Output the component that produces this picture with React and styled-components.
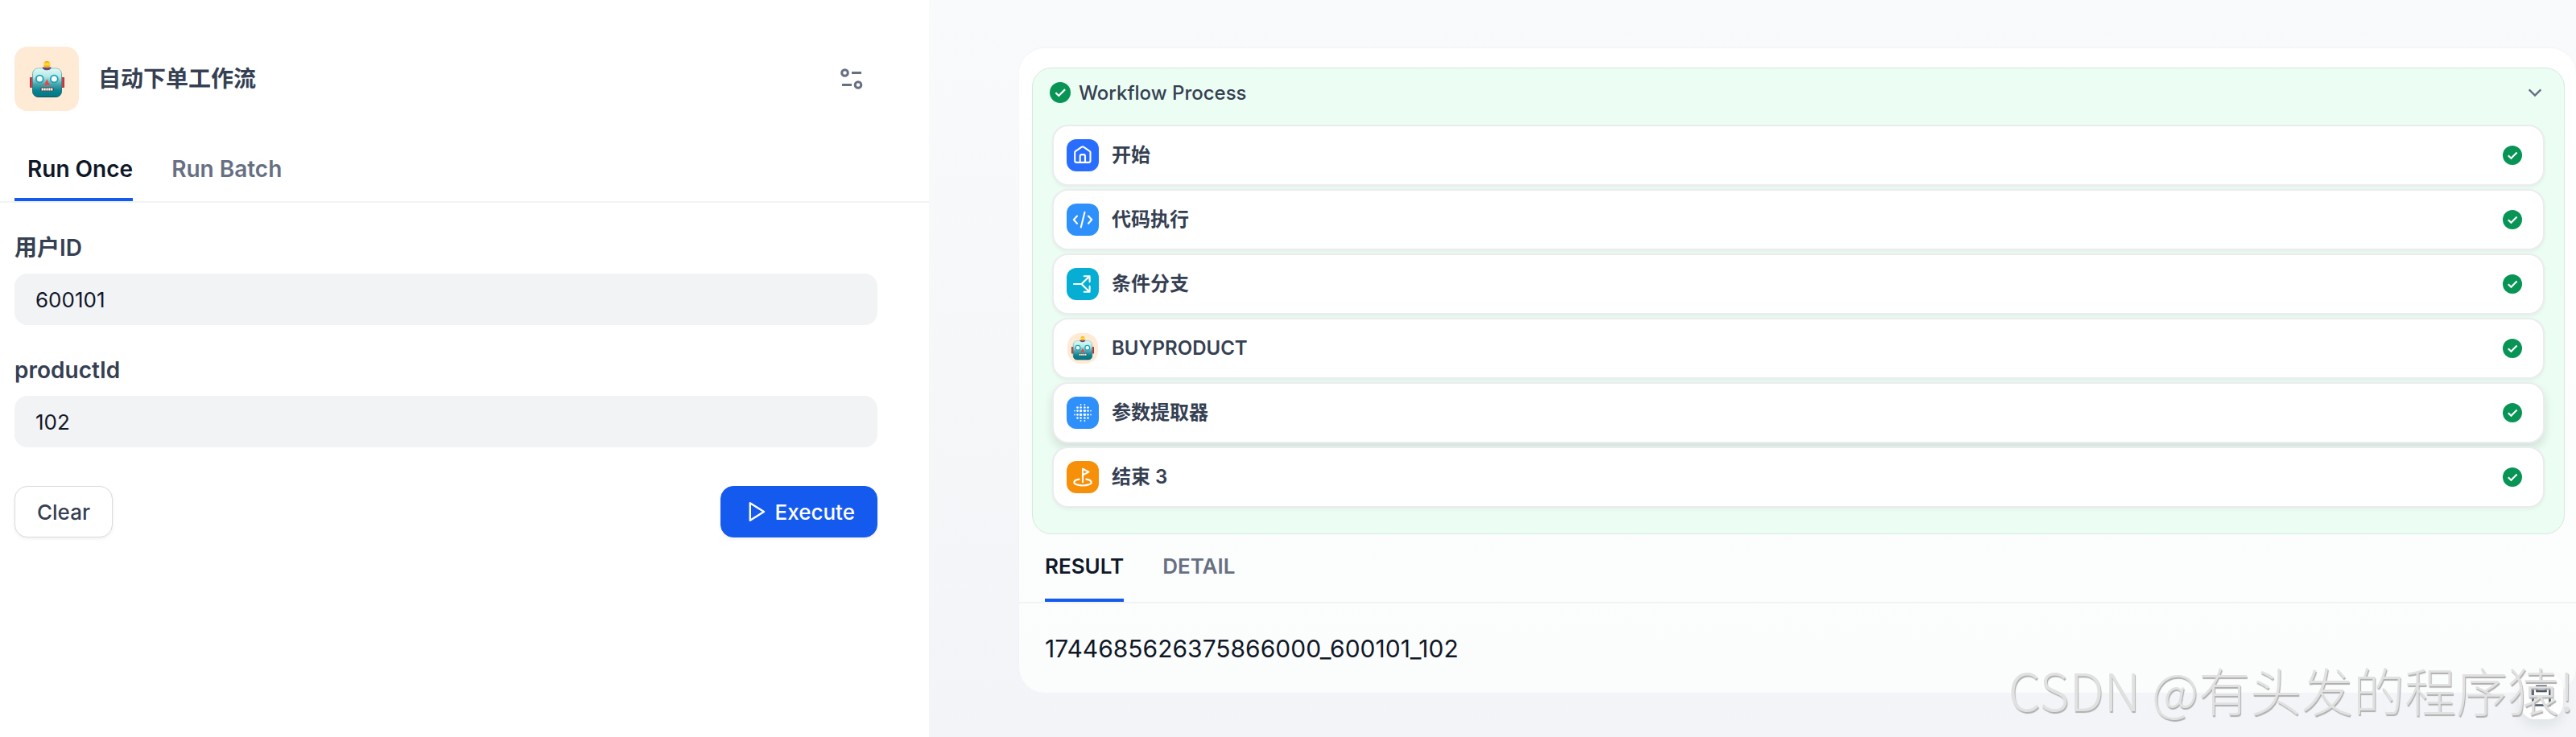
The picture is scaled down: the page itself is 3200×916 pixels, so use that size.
import React, { useState } from "react";
import styled, { createGlobalStyle, css } from "styled-components";

const GlobalStyle = createGlobalStyle`
  * {
    box-sizing: border-box;
  }
  body {
    margin: 0;
    background: #fff;
    color: #101828;
    font-family: Inter, "Noto Sans CJK SC", sans-serif;
  }
  button, input {
    font-family: inherit;
  }
`;

const ButtonReset = css`
  margin: 0;
  padding: 0;
  border: 0;
  background: none;
  color: inherit;
  cursor: pointer;
`;

const Page = styled.div`
  display: grid;
  grid-template-columns: 577fr 1023fr;
  min-height: 100vh;
`;

const FormPane = styled.aside`
  background: #fff;
`;

const FormHeader = styled.header`
  display: flex;
  align-items: center;
  padding: 58px 64px 0 18px;
`;

const AppIcon = styled.div`
  display: flex;
  align-items: center;
  justify-content: center;
  flex: none;
  width: ${(p) => p.$size}px;
  height: ${(p) => p.$size}px;
  border-radius: 16px;
  background: #ffead5;
  svg {
    width: ${(p) => p.$glyph}px;
  }
`;

const Title = styled.h1`
  flex: 1;
  margin: 0 0 0 24px;
  color: #354052;
  font-size: 28px;
  line-height: 40px;
  font-weight: 600;
`;

const SettingsButton = styled.button`
  ${ButtonReset};
  display: flex;
  padding: 16px;
`;

const Tabs = styled.div`
  display: flex;
  gap: ${(p) => p.$gap}px;
  padding: ${(p) => p.$padding};
  border-bottom: 2px solid #f2f3f5;
`;

const Tab = styled.button`
  ${ButtonReset};
  padding: ${(p) => p.$padding};
  border-bottom: 4px solid ${(p) => (p.$active ? "#155aef" : "transparent")};
  color: ${(p) => (p.$active ? "#101828" : "#676f83")};
  font-size: ${(p) => p.$size}px;
  line-height: 40px;
  font-weight: 600;
`;

const Form = styled.form`
  display: flex;
  flex-direction: column;
  gap: 36px;
  padding: 36px 64px 0 18px;
`;

const Field = styled.div`
  display: flex;
  flex-direction: column;
  gap: 12px;
`;

const Label = styled.label`
  color: #354052;
  font-size: 28px;
  line-height: 40px;
  font-weight: 600;
`;

const TextInput = styled.input`
  width: 100%;
  height: 64px;
  padding: 0 26px;
  border: 0;
  border-radius: 16px;
  background: #f2f3f5;
  color: #101828;
  font-size: 26px;
`;

const Actions = styled.div`
  display: flex;
  justify-content: space-between;
  padding-top: 12px;
`;

const ActionButton = styled.button`
  ${ButtonReset};
  display: flex;
  align-items: center;
  gap: 8px;
  height: 64px;
  padding: 0 27px;
  border: 1px solid ${(p) => (p.$primary ? "#155aef" : "#d9dbdf")};
  border-radius: 16px;
  background: ${(p) => (p.$primary ? "#155aef" : "#fff")};
  box-shadow: 0 2px 4px rgba(16, 24, 40, 0.06);
  color: ${(p) => (p.$primary ? "#fff" : "#354052")};
  font-size: 26px;
  font-weight: 500;
`;

const ResultPane = styled.main`
  position: relative;
  padding: 60px 0 52px 112px;
  background: linear-gradient(#f9fafb, #f2f4f7);
`;

const Card = styled.section`
  padding-top: 24px;
  border-radius: 32px;
  background: linear-gradient(#fff, #fbfcfc);
  box-shadow: 0 -1px 2px rgba(16, 24, 40, 0.03);
`;

const Process = styled.div`
  margin: 0 14px 0 16px;
  padding-bottom: 32px;
  border: 1px solid #d7e9df;
  border-radius: 24px;
  background: #ecfdf3;
`;

const ProcessHeader = styled.button`
  ${ButtonReset};
  display: flex;
  align-items: center;
  gap: 10px;
  width: 100%;
  height: 60px;
  padding: 0 20px 0 21px;
  color: #354052;
  font-size: 24px;
  font-weight: 500;
  text-align: left;
`;

const ProcessName = styled.span`
  flex: 1;
`;

const NodeList = styled.ul`
  display: flex;
  flex-direction: column;
  gap: 4px;
  margin: 10px 24px 0;
  padding: 0;
  list-style: none;
`;

const NodeRow = styled.li`
  display: flex;
  align-items: center;
  gap: 16px;
  height: 76px;
  padding: 0 26px 0 16px;
  border: 2px solid #ebecee;
  border-radius: 20px;
  background: #fff;
  box-shadow: ${(p) =>
    p.$raised
      ? "0 6px 12px rgba(16, 24, 40, 0.12)"
      : "0 2px 4px rgba(16, 24, 40, 0.05)"};
`;

const NodeTile = styled.div`
  display: flex;
  align-items: center;
  justify-content: center;
  flex: none;
  width: 40px;
  height: 40px;
  border-radius: 12px;
  background: ${(p) => p.$color};
`;

const NodeName = styled.span`
  flex: 1;
  color: #354052;
  font-size: 24px;
  line-height: 32px;
  font-weight: 600;
`;

const Output = styled.p`
  margin: 0;
  padding: 36px 32px 35px;
  font-size: 30px;
  line-height: 40px;
`;

const CopyButton = styled.button`
  ${ButtonReset};
  position: absolute;
  right: 16px;
  bottom: 22px;
  display: flex;
  align-items: center;
  justify-content: center;
  width: 54px;
  height: 58px;
  border-radius: 20px;
  background: #fff;
  box-shadow: 0 8px 16px rgba(16, 24, 40, 0.08);
`;

const Watermark = styled.div`
  position: absolute;
  right: 2px;
  bottom: 12px;
  color: #e1e1e1;
  font-family: "Noto Sans CJK SC", sans-serif;
  font-size: 64px;
  line-height: 96px;
  font-weight: 300;
  text-shadow: 1px 2px 1px #b0b0b0;
  white-space: nowrap;
  pointer-events: none;
`;

const Robot = () => (
  <svg viewBox="0 0 43 45" aria-hidden="true">
    <defs>
      <linearGradient id="robot-face" x1="0" y1="0" x2="0" y2="1">
        <stop offset="0" stopColor="#dffaf5" />
        <stop offset="0.3" stopColor="#b4e8e5" />
        <stop offset="0.55" stopColor="#4fa5ad" />
        <stop offset="0.78" stopColor="#048593" />
        <stop offset="1" stopColor="#067681" />
      </linearGradient>
      <linearGradient id="robot-edge" x1="0" y1="0" x2="0" y2="1">
        <stop offset="0" stopColor="#8fc4c3" />
        <stop offset="0.5" stopColor="#478c96" />
        <stop offset="1" stopColor="#075363" />
      </linearGradient>
      <linearGradient id="robot-bulb" x1="0" y1="0" x2="0" y2="1">
        <stop offset="0" stopColor="#f59b13" />
        <stop offset="0.45" stopColor="#ffe52e" />
        <stop offset="1" stopColor="#f08a15" />
      </linearGradient>
    </defs>
    <rect x="0" y="20" width="4" height="13" rx="1" fill="#a62835" />
    <rect x="39" y="20" width="4" height="13" rx="1" fill="#a62835" />
    <path d="M2 20.5v12M41 20.5v12" stroke="#f05a5a" strokeWidth="1" />
    <rect x="3.5" y="8.8" width="36" height="35.7" rx="7" fill="url(#robot-face)" stroke="url(#robot-edge)" />
    <path d="M15.7 7.4h11c0 2.4-2.4 3.8-5.5 3.8s-5.5-1.4-5.5-3.8z" fill="#634a83" />
    <circle cx="21.3" cy="4.2" r="4.1" fill="url(#robot-bulb)" />
    <circle cx="12.3" cy="22" r="4.4" fill="#fff" stroke="#0fa3bb" strokeWidth="1.8" />
    <circle cx="30.3" cy="22" r="4.4" fill="#fff" stroke="#0fa3bb" strokeWidth="1.8" />
    <path d="M21.3 22.5l3.6 7.5h-7.2z" fill="#e94747" />
    <rect x="13" y="32.6" width="17" height="4.6" rx="2.2" fill="#59433f" />
    <path d="M14.6 34.9h13.8" stroke="#fff" strokeWidth="3" strokeDasharray="2.2 0.7" />
  </svg>
);

const CheckIcon = ({ size }) => (
  <svg width={size} height={size} viewBox="0 0 24 24" fill="none" aria-hidden="true">
    <circle cx="12" cy="12" r="12" fill="#079455" />
    <path d="M6.8 12.2l3.6 3.5 7.2-7.3" stroke="#fff" strokeWidth="2.1" />
  </svg>
);

const Glyph = ({ children }) => (
  <svg
    width="40"
    height="40"
    viewBox="0 0 40 40"
    fill="none"
    stroke="#fff"
    strokeWidth="2.1"
    strokeLinecap="round"
    strokeLinejoin="round"
    aria-hidden="true"
  >
    {children}
  </svg>
);

const HomeGlyph = () => (
  <Glyph>
    <path d="M10.2 16.5c0-.7.3-1.3.9-1.7l7.7-5.1c.7-.5 1.5-.5 2.2 0l7.6 5.1c.6.4.9 1 .9 1.7v10.3c0 1.2-.9 2.1-2.1 2.1H12.3c-1.2 0-2.1-.9-2.1-2.1z" />
    <path d="M16.7 28.8v-7.6c0-1.2.9-2.1 2.1-2.1h2.1c1.2 0 2.1.9 2.1 2.1v7.6" />
  </Glyph>
);

const CodeGlyph = () => (
  <Glyph>
    <path d="M13 15.5L8.8 20l4.2 4.7M27 15.5l4.2 4.5-4.2 4.7M22.5 10.7l-4.7 18.8" />
  </Glyph>
);

const BranchGlyph = () => (
  <Glyph>
    <path d="M9 20h9.5l9.6-9.4M18.5 20l9.6 9.4M21.7 10.3h6.9v6.9M21.7 29.8h6.9v-6.9" />
  </Glyph>
);

const dotAxis = [10, 13.5, 17.6, 22.4, 26.5, 30];

// dots grow towards the centre and the corners stay empty
const ExtractorGlyph = () => (
  <svg width="40" height="40" viewBox="0 0 40 40" fill="#fff" aria-hidden="true">
    {dotAxis.map((y, row) =>
      dotAxis.map((x, col) => {
        const ring = Math.abs(row - 2.5) + Math.abs(col - 2.5);
        if (ring > 3) return null;
        const outer = row === 0 || row === 5 || col === 0 || col === 5;
        const r = ring === 1 ? 1.7 : outer ? 0.9 : 1.3;
        return <circle key={`${row}-${col}`} cx={x} cy={y} r={r} />;
      })
    )}
  </svg>
);

const EndGlyph = () => (
  <Glyph>
    <path d="M20 26.3V9.8l7.5 3.8-7.3 3.6" />
    <path d="M15.6 22.6c-3.7.6-6.3 2-6.3 3.8 0 2.3 4.8 4.1 10.7 4.1s10.7-1.8 10.7-4.1c0-1.8-2.6-3.2-6.3-3.8" />
  </Glyph>
);

const nodes = [
  { name: "开始", color: "#296dff", icon: <HomeGlyph /> },
  { name: "代码执行", color: "#2e90fa", icon: <CodeGlyph /> },
  { name: "条件分支", color: "#06aed4", icon: <BranchGlyph /> },
  { name: "BUYPRODUCT" },
  { name: "参数提取器", color: "#2e90fa", icon: <ExtractorGlyph />, raised: true },
  { name: "结束 3", color: "#f79009", icon: <EndGlyph /> },
];

const RunForm = () => {
  const [userId, setUserId] = useState("600101");
  const [productId, setProductId] = useState("102");

  const clear = () => {
    setUserId("");
    setProductId("");
  };

  return (
    <Form onSubmit={(e) => e.preventDefault()}>
      <Field>
        <Label htmlFor="userId">用户ID</Label>
        <TextInput id="userId" value={userId} onChange={(e) => setUserId(e.target.value)} />
      </Field>
      <Field>
        <Label htmlFor="productId">productId</Label>
        <TextInput id="productId" value={productId} onChange={(e) => setProductId(e.target.value)} />
      </Field>
      <Actions>
        <ActionButton type="button" onClick={clear}>
          Clear
        </ActionButton>
        <ActionButton type="submit" $primary>
          <svg width="32" height="32" viewBox="0 0 32 32" fill="none" aria-hidden="true">
            <path d="M8.8 5.2v21.6L26 16z" stroke="#fff" strokeWidth="2.4" strokeLinejoin="round" />
          </svg>
          Execute
        </ActionButton>
      </Actions>
    </Form>
  );
};

const App = () => {
  const [mode, setMode] = useState("once");
  const [view, setView] = useState("result");
  const [open, setOpen] = useState(true);

  return (
    <>
      <GlobalStyle />
      <Page>
        <FormPane>
          <FormHeader>
            <AppIcon $size={80} $glyph={43}>
              <Robot />
            </AppIcon>
            <Title>自动下单工作流</Title>
            <SettingsButton type="button" aria-label="Settings">
              <svg width="32" height="32" viewBox="0 0 32 32" fill="none" stroke="#676f83" strokeWidth="3" aria-hidden="true">
                <circle cx="7.5" cy="8.5" r="3.8" />
                <circle cx="24" cy="23.5" r="3.8" />
                <path d="M16 8.5h12M4 23.5h12" />
              </svg>
            </SettingsButton>
          </FormHeader>
          <Tabs role="tablist" $gap={32} $padding="52px 18px 0">
            <Tab role="tab" $size={28} $padding="0 0 16px 16px" $active={mode === "once"} onClick={() => setMode("once")}>
              Run Once
            </Tab>
            <Tab role="tab" $size={28} $padding="0 0 16px 16px" $active={mode === "batch"} onClick={() => setMode("batch")}>
              Run Batch
            </Tab>
          </Tabs>
          <RunForm />
        </FormPane>

        <ResultPane>
          <Card>
            <Process>
              <ProcessHeader type="button" aria-expanded={open} onClick={() => setOpen(!open)}>
                <CheckIcon size={26} />
                <ProcessName>Workflow Process</ProcessName>
                <svg width="32" height="32" viewBox="0 0 32 32" fill="none" aria-hidden="true">
                  <path d="M8.7 12.3l7.3 7.2 7.3-7.2" stroke="#676f83" strokeWidth="2.4" />
                </svg>
              </ProcessHeader>
              {open && (
                <NodeList>
                  {nodes.map((node) => (
                    <NodeRow key={node.name} $raised={node.raised}>
                      {node.icon ? (
                        <NodeTile $color={node.color}>{node.icon}</NodeTile>
                      ) : (
                        <NodeTile $color="transparent">
                          <AppIcon $size={38} $glyph={28}>
                            <Robot />
                          </AppIcon>
                        </NodeTile>
                      )}
                      <NodeName>{node.name}</NodeName>
                      <CheckIcon size={24} />
                    </NodeRow>
                  ))}
                </NodeList>
              )}
            </Process>
            <Tabs role="tablist" $gap={48} $padding="0 32px">
              <Tab role="tab" $size={26} $padding="20px 0" $active={view === "result"} onClick={() => setView("result")}>
                RESULT
              </Tab>
              <Tab role="tab" $size={26} $padding="20px 0" $active={view === "detail"} onClick={() => setView("detail")}>
                DETAIL
              </Tab>
            </Tabs>
            <Output>1744685626375866000_600101_102</Output>
          </Card>
          <CopyButton type="button" aria-label="Copy">
            <svg width="32" height="32" viewBox="0 0 32 32" fill="none" stroke="#495464" strokeWidth="2.6" aria-hidden="true">
              <path d="M10.5 6.5H5.5v21h21v-21h-5" />
              <rect x="10.5" y="4" width="11" height="6" />
            </svg>
          </CopyButton>
          <Watermark>CSDN @有头发的程序猿!</Watermark>
        </ResultPane>
      </Page>
    </>
  );
};

export default App;
